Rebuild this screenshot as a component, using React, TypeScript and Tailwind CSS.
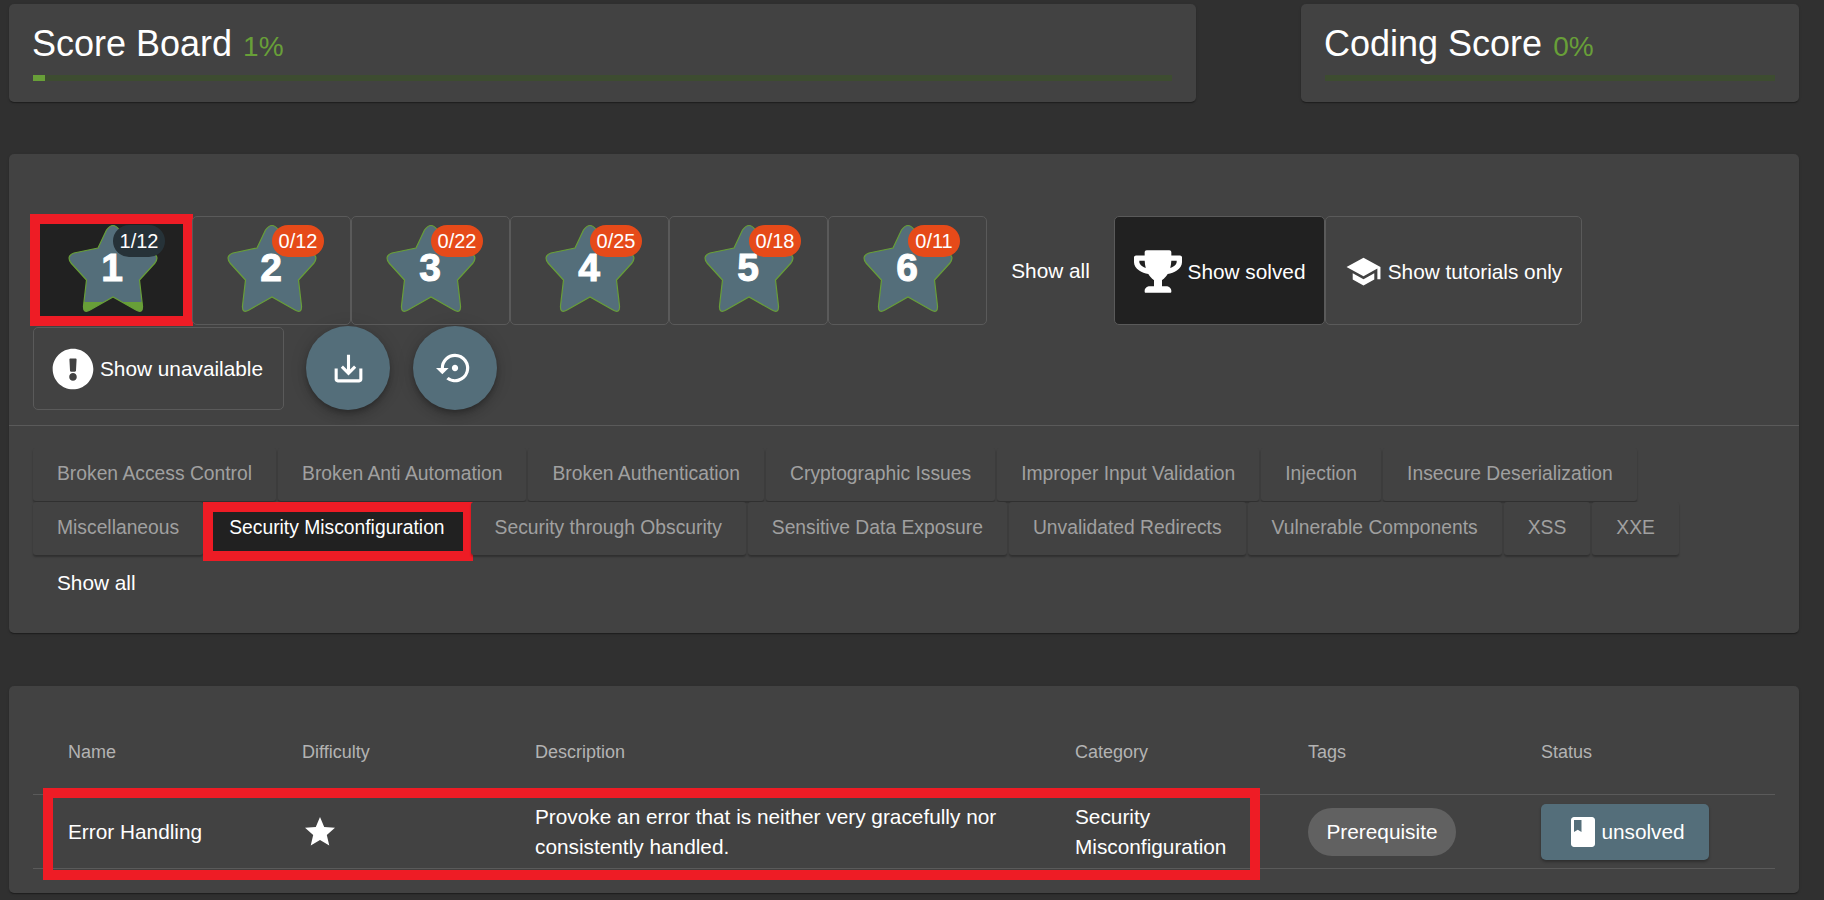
import React from 'react';
import { FaExclamationCircle, FaTrophy } from 'react-icons/fa';
import { MdBook, MdOutlineSettingsBackupRestore, MdSaveAlt, MdSchool, MdStar } from 'react-icons/md';

const STAR_PATH =
  'M38.5 6 Q45 -3 51.5 6 L60 24 L84 29 Q92 32 87 39 L71.5 56 L74.5 82 Q75 90 68 86 L45 73 L22 86 Q15 90 15.5 82 L18.5 56 L3 39 Q-2 32 6 29 L30 24 Z';

const stars = [
  { level: 1, count: '1/12', solved: true },
  { level: 2, count: '0/12' },
  { level: 3, count: '0/22' },
  { level: 4, count: '0/25' },
  { level: 5, count: '0/18' },
  { level: 6, count: '0/11' },
];

const categories = [
  'Broken Access Control',
  'Broken Anti Automation',
  'Broken Authentication',
  'Cryptographic Issues',
  'Improper Input Validation',
  'Injection',
  'Insecure Deserialization',
  'Miscellaneous',
  'Security Misconfiguration',
  'Security through Obscurity',
  'Sensitive Data Exposure',
  'Unvalidated Redirects',
  'Vulnerable Components',
  'XSS',
  'XXE',
];

const columns = ['Name', 'Difficulty', 'Description', 'Category', 'Tags', 'Status'];

const cardClass = 'rounded-[5px] bg-[#424242] shadow-[0_2px_1px_-1px_rgba(0,0,0,.2),0_1px_1px_0_rgba(0,0,0,.14),0_1px_3px_0_rgba(0,0,0,.12)]';
const toggleClass = 'flex items-center justify-center gap-[6px] rounded-[5px] border border-[#5a5a5a] pt-[2px] text-[20.8px] text-white';
const rowGrid = 'grid grid-cols-[234px_233px_540px_233px_233px_234px] pl-[35px]';
const fabClass =
  'flex h-[84px] w-[84px] items-center justify-center rounded-full bg-[#546e7a] text-white shadow-[0_3px_5px_-1px_rgba(0,0,0,.2),0_6px_10px_0_rgba(0,0,0,.14),0_1px_18px_0_rgba(0,0,0,.12)]';

function ScoreCard({ title, percent, className, fill }: { title: string; percent: string; className: string; fill: string }) {
  return (
    <div className={`${cardClass} ${className} h-[98px] px-6 pt-[22px]`}>
      <div className="-ml-px flex items-baseline gap-[11px] leading-none">
        <span className="text-[36px] leading-[36px] text-white">{title}</span>
        <span className="text-[28px] leading-[36px] text-[#689f38]">{percent}</span>
      </div>
      <div className="mt-[10px] h-[6px] w-full bg-[#3d4c30]">
        <div className={`h-full bg-[#689f38] ${fill}`} />
      </div>
    </div>
  );
}

function StarButton({ level, count, solved }: { level: number; count: string; solved?: boolean }) {
  return (
    <button className={`relative h-[109px] w-[159px] shrink-0 rounded-[5px] border border-[#5a5a5a] ${solved ? 'bg-[#212121]' : ''}`}>
      <svg viewBox="0 0 90 90" className="absolute left-[34px] top-[7px] h-[90px] w-[90px]">
        {solved && (
          <defs>
            <linearGradient id="star-fill" gradientUnits="userSpaceOnUse" x1="0" y1="0" x2="0" y2="90">
              <stop offset="0.865" stopColor="#546e7a" />
              <stop offset="0.865" stopColor="#689f38" />
            </linearGradient>
          </defs>
        )}
        <path d={STAR_PATH} fill={solved ? 'url(#star-fill)' : '#546e7a'} stroke="#689f38" strokeWidth="1.2" />
      </svg>
      <span className="absolute left-[33px] top-[28px] w-[90px] text-center text-[39px] font-bold leading-[45px] text-white [-webkit-text-stroke:1px_white]">
        {level}
      </span>
      <span
        className={`absolute left-[79px] top-[8px] flex h-[32px] w-[52px] items-center justify-center rounded-[16px] text-[20px] text-white ${
          solved ? 'bg-[#263238]' : 'bg-[#e64a19]'
        }`}
      >
        {count}
      </span>
      {solved && <span className="absolute -bottom-[2px] -left-[4px] -right-[2px] -top-[3px] border-[10px] border-[#ee1c25]" />}
    </button>
  );
}

function Chip({ label }: { label: string }) {
  const active = label === 'Security Misconfiguration';
  return (
    <div
      className={`relative flex h-[53px] items-center rounded-[3px] px-6 text-[19.3px] shadow-[0_2px_2px_rgba(0,0,0,.28)] ${
        active ? 'bg-[#212121] text-white' : 'bg-[#424242] text-[#a0a0a0]'
      }`}
    >
      {label}
      {active && <span className="absolute -left-[2px] -right-[4px] -bottom-[6px] top-0 border-[10px] border-[#ee1c25]" />}
    </div>
  );
}

export default function App() {
  return (
    <div className="min-h-screen bg-[#303030] pb-[7px] pl-[9px] pr-[25px] pt-[4px] font-['Liberation_Sans',Arial,sans-serif]">
      {/* score cards */}
      <div className="flex justify-between">
        <ScoreCard title="Score Board" percent="1%" className="w-[1187px]" fill="w-[12px]" />
        <ScoreCard title="Coding Score" percent="0%" className="w-[498px]" fill="w-0" />
      </div>

      {/* filters */}
      <div className={`${cardClass} mt-[52px] h-[479px] pt-[62px]`}>
        <div className="flex flex-wrap px-6 pb-[15px]">
          {stars.map((s) => (
            <StarButton key={s.level} {...s} />
          ))}
          <div className="flex h-[109px] w-[127px] items-center justify-center text-[20.8px] text-white">Show all</div>
          <div className={`${toggleClass} h-[109px] w-[211px] bg-[#212121]`}>
            <FaTrophy className="h-[43px] w-[48px]" />
            Show solved
          </div>
          <div className={`${toggleClass} h-[109px] w-[257px]`}>
            <MdSchool size={37} />
            Show tutorials only
          </div>
          <div className="mt-px flex items-center">
            <div className={`${toggleClass} h-[83px] w-[251px] pr-[2px]`}>
              <FaExclamationCircle className="h-[42px] w-[42px]" />
              Show unavailable
            </div>
            <div className={`${fabClass} ml-[22px]`}>
              <MdSaveAlt size={37} />
            </div>
            <div className={`${fabClass} ml-[23px]`}>
              <MdOutlineSettingsBackupRestore size={38} />
            </div>
          </div>
        </div>
        <div className="h-px bg-[#5a5a5a]" />
        <div className="flex flex-wrap gap-x-[2px] gap-y-px px-6 pt-[22px]">
          {categories.map((c) => (
            <Chip key={c} label={c} />
          ))}
          <div className="flex h-[53px] items-center px-6 text-[20.8px] text-white">Show all</div>
        </div>
      </div>

      {/* challenge table */}
      <div className={`${cardClass} mt-[53px] h-[207px] px-6`}>
        <div className={`${rowGrid} h-[108px] items-center pt-[24px] text-[18px] text-[#b3b3b3]`}>
          {columns.map((c) => (
            <div key={c}>{c}</div>
          ))}
        </div>
        <div className={`${rowGrid} relative h-[75px] items-center border-y-[1.5px] border-[#5a5a5a] text-[20.8px] leading-[30px] text-white`}>
          <div>Error Handling</div>
          <div>
            <MdStar size={36} />
          </div>
          <div className="pr-[60px]">Provoke an error that is neither very gracefully nor consistently handled.</div>
          <div className="pr-[20px]">Security Misconfiguration</div>
          <div>
            <span className="inline-flex h-[48px] w-[148px] items-center justify-center rounded-full bg-[#616161]">Prerequisite</span>
          </div>
          <div>
            <span className="inline-flex h-[56px] w-[168px] items-center justify-center rounded-[5px] bg-[#546e7a] shadow-[0_2px_3px_rgba(0,0,0,.3)]">
              <MdBook size={36} />
              unsolved
            </span>
          </div>
          <span className="absolute -top-[7px] bottom-[-12px] left-[10px] w-[1217px] border-[10px] border-[#ee1c25]" />
        </div>
      </div>
    </div>
  );
}
